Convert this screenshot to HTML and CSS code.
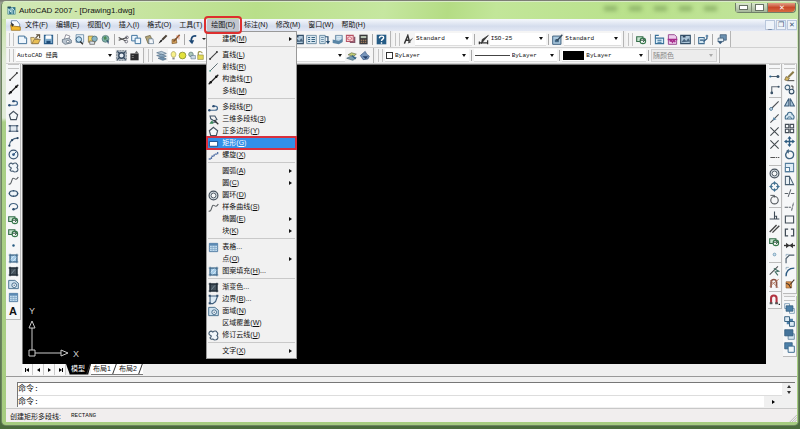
FILE: index.html
```html
<!DOCTYPE html>
<html lang="zh-CN">
<head>
    <meta charset="UTF-8">
    <meta name="viewport" content="width=device-width, initial-scale=1.0">
    <title>AutoCAD 2007 - [Drawing1.dwg]</title>
    <link rel="stylesheet" href="styles.css">
</head>
<body>
    <!-- icon set -->
    <svg class="defs" aria-hidden="true">
        <symbol id="app" viewBox="0 0 16 16"><path d="M1 2h14v13H1z" fill="#2a6f86"/><path d="M3 14V5l4 6V4M9 14V3l4 5v6" fill="none" stroke="#d6f2f2" stroke-width="1.6"/><path d="M1 1h6v2H1z" fill="#183c4c"/></symbol>
        <symbol id="doc" viewBox="0 0 16 16"><path d="M2 1h8l4 5v4H2z" fill="#f8fbff" stroke="#4a6a96"/><path d="M1 7l5 2 9 1v5H2z" fill="#f2b92c" stroke="#9a6a10"/><path d="M1 3l5 4-3 3z" fill="#333"/></symbol>
        <symbol id="new" viewBox="0 0 16 16"><path d="M2 3h9l3 3v8H2z" fill="#eef6fd" stroke="#3f6f98" stroke-width="1.4"/><path d="M11 3v3h3" fill="none" stroke="#3f6f98"/></symbol>
        <symbol id="open" viewBox="0 0 16 16"><path d="M1 5h5l1 2h5v7H2z" fill="#f3d684" stroke="#7d6840"/><path d="M3 14l3-6h9l-3 6z" fill="#e9bf55" stroke="#7d6840"/><path d="M8 6l5-5M9 1h5v5" fill="none" stroke="#574a35" stroke-width="1.6"/></symbol>
        <symbol id="save" viewBox="0 0 16 16"><path d="M2 2h12v12H2z" fill="#7da9cb" stroke="#2b5e8b" stroke-width="1.5"/><path d="M4 2h8v5H4z" fill="#fff"/><path d="M5 10h6v4H5z" fill="#1f4b76"/></symbol>
        <symbol id="print" viewBox="0 0 16 16"><path d="M5 7l2-6 6 2-2 5" fill="#fff" stroke="#667"/><path d="M2 8l9-2 4 3v4l-9 2-4-3z" fill="#bac5d0" stroke="#4f5f70"/><circle cx="10" cy="11" r="2" fill="#fff" stroke="#4f5f70"/></symbol>
        <symbol id="preview" viewBox="0 0 16 16"><path d="M3 1h11v11H3z" fill="#e8f2fa" stroke="#4d7595"/><circle cx="7" cy="8" r="4" fill="#bfe0f3" stroke="#355b7a" stroke-width="1.4"/><path d="M9 11l4 4" stroke="#333" stroke-width="2"/></symbol>
        <symbol id="publish" viewBox="0 0 16 16"><path d="M2 3h7l3 3v6H2z" fill="#f0d467" stroke="#746437"/><circle cx="11" cy="7" r="4" fill="#8ab5c5" stroke="#3f6472"/><path d="M4 10l7 1v4H4z" fill="#dae1e8" stroke="#555"/></symbol>
        <symbol id="globe" viewBox="0 0 16 16"><circle cx="8" cy="7" r="5" fill="#7fb0a8" stroke="#48706e"/><path d="M5 5l3-2 2 3-3 3zM9 9l3-1-1 3z" fill="#4b8b55"/><path d="M9 8l3 7 1-4" fill="#39547a"/></symbol>
        <symbol id="cut" viewBox="0 0 16 16"><path d="M1 5l10 5M1 9l12-4" stroke="#444" stroke-width="1.6"/><circle cx="13" cy="5" r="2" fill="none" stroke="#445"/><circle cx="12" cy="11" r="2" fill="none" stroke="#445"/></symbol>
        <symbol id="copy" viewBox="0 0 16 16"><path d="M1 2h8v8H1z" fill="#edf6fd" stroke="#3c719d" stroke-width="1.4"/><path d="M6 6h8v8H6z" fill="#edf6fd" stroke="#3c719d" stroke-width="1.4"/></symbol>
        <symbol id="paste" viewBox="0 0 16 16"><path d="M2 4l7-2 4 9-7 3z" fill="#b1a477" stroke="#655a3c"/><path d="M7 7h6l1 7H7z" fill="#f4f7fb" stroke="#54708b"/></symbol>
        <symbol id="brush" viewBox="0 0 16 16"><path d="M14 2L8 8" stroke="#4d4338" stroke-width="3"/><path d="M9 7l-2 4-5 3 3-5z" fill="#202020"/></symbol>
        <symbol id="block" viewBox="0 0 16 16"><path d="M3 8l6-1 1 6-7 1z" fill="#d7a45c" stroke="#76532d"/><path d="M14 1L8 8l-3 3" fill="none" stroke="#7b502d" stroke-width="2.2"/><path d="M9 3h4v5" fill="none" stroke="#d8683f"/></symbol>
        <symbol id="undo" viewBox="0 0 16 16"><path d="M12 3C6 2 4 6 5 12" fill="none" stroke="#1d4875" stroke-width="2.6"/><path d="M1 9h8l-3 6z" fill="#1d4875"/></symbol>
        <symbol id="props" viewBox="0 0 16 16"><path d="M1 2h14v12H1z" fill="#dbe9f2" stroke="#476e89"/><path d="M3 5h3M8 5h5M3 8h3M8 8h5M3 11h3M8 11h5" stroke="#34617f" stroke-width="1.6"/></symbol>
        <symbol id="center" viewBox="0 0 16 16"><path d="M1 2h8v12H1z" fill="#d8e8f2" stroke="#3f6988"/><path d="M3 5h4M3 8h4M3 11h4" stroke="#3f6988"/><path d="M9 4h4v7" fill="none" stroke="#274d70" stroke-width="1.8"/><path d="M10 10h6l-3 5z" fill="#274d70"/></symbol>
        <symbol id="sheet" viewBox="0 0 16 16"><path d="M5 2h10v9H5z" fill="#b2cee1" stroke="#52738f"/><path d="M1 8l9 2 5-3v5l-5 3-9-2z" fill="#5a86a6"/><path d="M7 4h6M7 7h6" stroke="#fff"/></symbol>
        <symbol id="markup" viewBox="0 0 16 16"><path d="M2 2h10v9H2z" fill="#f8dadd" stroke="#b75264" stroke-width="1.5"/><path d="M4 5l3-1 3 2-2 3-4-1z" fill="none" stroke="#c53b50"/><path d="M7 12h7v-8" fill="none" stroke="#87576a" stroke-width="2"/></symbol>
        <symbol id="calc" viewBox="0 0 16 16"><path d="M2 1h12v14H2z" fill="#39393b"/><path d="M4 3h8v3H4z" fill="#b9c5b5"/><path d="M4 9h8M4 12h8" stroke="#bd8f68" stroke-width="1.6" stroke-dasharray="2 1"/></symbol>
        <symbol id="help" viewBox="0 0 16 16"><path d="M1 1h14v14H1z" fill="#245b85"/><path d="M5 6c0-4 7-4 6 0-1 2-3 2-3 4M8 12v2" fill="none" stroke="#fff" stroke-width="2"/></symbol>
        <symbol id="textstyle" viewBox="0 0 16 16"><path d="M2 14L7 2l3 11M4 9h5" fill="none" stroke="#333" stroke-width="2"/><path d="M15 5l-5 7-3 2 1-4z" fill="#555"/></symbol>
        <symbol id="dimstyle" viewBox="0 0 16 16"><path d="M1 13h13M2 11v4M14 9v6" stroke="#333" stroke-width="1.8"/><path d="M15 2l-7 8-3 4 1-6z" fill="#333" stroke="#333"/></symbol>
        <symbol id="tabstyle" viewBox="0 0 16 16"><path d="M1 3h12v12H1z" fill="#a9c7dd" stroke="#3d617f" stroke-width="1.4"/><path d="M4 8h6v4H4z" fill="#456b89"/><path d="M15 1L8 9l-2-1" fill="none" stroke="#34495c" stroke-width="2"/></symbol>
        <symbol id="region2" viewBox="0 0 16 16"><path d="M1 4h9v7H1z" fill="#c7e3cf" stroke="#356d49" stroke-width="1.6"/><circle cx="10" cy="10" r="4" fill="#fff" stroke="#37794c" stroke-width="1.6"/><path d="M6 9h6M10 7l3 2-3 3" fill="none" stroke="#214a32" stroke-width="1.4"/></symbol>
        <symbol id="xref" viewBox="0 0 16 16"><path d="M2 6h12v8H2z" fill="#d9edf8" stroke="#3a7199" stroke-width="1.5"/><path d="M2 6V2h5M5 9h6M5 12h6" fill="none" stroke="#3a7199" stroke-width="1.6"/></symbol>
        <symbol id="attr" viewBox="0 0 16 16"><path d="M2 1h9l3 3v11H2z" fill="#edcceb" stroke="#984a91" stroke-width="1.4"/><path d="M1 8h14M4 11l2-2 2 3 2-3 2 3" fill="none" stroke="#a72b8b" stroke-width="2"/></symbol>
        <symbol id="image" viewBox="0 0 16 16"><path d="M1 2h14v12H1z" fill="#acc5d8" stroke="#355069" stroke-width="1.6"/><path d="M2 12l4-5 3 3 3-4 3 5" fill="#49657f"/><path d="M4 4h4" stroke="#263b54" stroke-width="2"/></symbol>
        <symbol id="blockedit" viewBox="0 0 16 16"><path d="M1 5h8v9H1z" fill="#d4e7f2" stroke="#406d91" stroke-width="1.5"/><path d="M3 9h5M8 11l5-4V3" fill="none" stroke="#2e5980" stroke-width="1.7"/><circle cx="13" cy="3" r="2" fill="#668bab"/></symbol>
        <symbol id="stack" viewBox="0 0 16 16"><path d="M6 1h9v8H6z" fill="#6c91b0" stroke="#34526d"/><path d="M3 6h8v5H3z" fill="#dce9f2" stroke="#34526d"/><path d="M2 10l4 5 4-4" fill="#36597a"/></symbol>
        <symbol id="gear" viewBox="0 0 16 16"><path d="M1 1h14v14H1z" fill="#b8c1ca" stroke="#52606d" stroke-dasharray="3 1"/><circle cx="8" cy="8" r="4" fill="#e6edf4" stroke="#31465c" stroke-width="2"/><path d="M2 2l3 3M14 2l-3 3M2 14l3-3M14 14l-3-3" stroke="#31465c" stroke-width="1.6"/></symbol>
        <symbol id="myws" viewBox="0 0 16 16"><path d="M2 5h12v10H2z" fill="#2b2b2d"/><path d="M8 5l3-4 3 4" fill="#666"/><path d="M4 8h3M4 11h3" stroke="#999"/></symbol>
        <symbol id="layers" viewBox="0 0 16 16"><path d="M1 4l7-2 7 3-6 2z" fill="#b8cbd9" stroke="#536f88"/><path d="M1 8l7-2 7 3-6 2z" fill="#8eacc3" stroke="#536f88"/><path d="M3 12l6-2 6 3-5 2z" fill="#6e91ae" stroke="#536f88"/></symbol>
        <symbol id="bulb" viewBox="0 0 16 16"><path d="M6 11C2 7 4 1 8 1s6 6 2 10z" fill="#f8f18a" stroke="#8a8240"/><path d="M6 12h4v3H6z" fill="#89888a"/></symbol>
        <symbol id="sun" viewBox="0 0 16 16"><circle cx="8" cy="8" r="6" fill="#e2e23d" stroke="#8c9134" stroke-width="1.5"/></symbol>
        <symbol id="vp" viewBox="0 0 16 16"><circle cx="7" cy="6" r="4" fill="#abc7bb" stroke="#5d7d77" stroke-width="1.4"/><path d="M7 8h8v6H7z" fill="#cbd9e5" stroke="#597388"/></symbol>
        <symbol id="lock" viewBox="0 0 16 16"><path d="M4 7V3c1-3 7-2 7 1" fill="none" stroke="#9a9345" stroke-width="2"/><path d="M3 7h10v8H3z" fill="#e2d953" stroke="#8a823b"/></symbol>
        <symbol id="layprev" viewBox="0 0 16 16"><path d="M1 12l6-3 8 2-5 4z" fill="#789bae" stroke="#476678"/><path d="M3 7l5-3 7 2-4 3z" fill="#c0cb74" stroke="#69724a"/><path d="M9 8l5 5" stroke="#2f638a" stroke-width="2"/></symbol>
        <symbol id="laystate" viewBox="0 0 16 16"><path d="M2 8l7-6 2 4 4 3-2 4-7 1z" fill="#7795ba" stroke="#33527d"/><path d="M5 9h8l-3 4z" fill="#233f69"/></symbol>
        <symbol id="line" viewBox="0 0 16 16"><path d="M3 13L13 3" stroke="#444" stroke-width="1.6"/><circle cx="3" cy="13" r="1.4" fill="#333"/><circle cx="13" cy="3" r="1.4" fill="#333"/></symbol>
        <symbol id="ray" viewBox="0 0 16 16"><path d="M3 13L14 2" stroke="#596b70" stroke-width="1.4"/><circle cx="3" cy="13" r="1.2" fill="#398"/></symbol>
        <symbol id="xline" viewBox="0 0 16 16"><path d="M1 15L15 1" stroke="#222" stroke-width="1.8"/><circle cx="4" cy="12" r="1.8" fill="#111"/><circle cx="12" cy="4" r="1.8" fill="#111"/></symbol>
        <symbol id="pline" viewBox="0 0 16 16"><path d="M2 12h8c5 0 5-6 0-6H8M4 12" fill="none" stroke="#456b91" stroke-width="1.8"/><circle cx="8" cy="6" r="1.8" fill="#2b4c70"/><circle cx="2" cy="12" r="1.8" fill="#2b4c70"/></symbol>
        <symbol id="poly3d" viewBox="0 0 16 16"><path d="M3 3h7l3 5-4 2-5-3zM4 12h9" fill="none" stroke="#3e5267" stroke-width="1.6"/><path d="M2 14l4-5 2 5z" fill="#368655"/><path d="M9 9l6 6" stroke="#333" stroke-width="1.8"/></symbol>
        <symbol id="polygon" viewBox="0 0 16 16"><path d="M8 2l6 5-2 7H4L2 7z" fill="#f4f8fa" stroke="#44515e" stroke-width="1.7"/></symbol>
        <symbol id="rect" viewBox="0 0 16 16"><path d="M3 4h10v8H3z" fill="#e2eaf1" stroke="#495e75" stroke-width="1.5"/><path d="M1 3h3v2H1zM12 11h3v2h-3zM12 3h3v2h-3zM1 11h3v2H1z" fill="#40566d"/></symbol>
        <symbol id="rectsel" viewBox="0 0 16 16"><path d="M2 5h12v7H2z" fill="#fff" stroke="#194f8d" stroke-width="1.4"/></symbol>
        <symbol id="arc" viewBox="0 0 16 16"><path d="M2 14C2 8 7 3 14 3" fill="none" stroke="#49657e" stroke-width="1.7"/><circle cx="2" cy="14" r="1.6" fill="#284562"/><circle cx="6" cy="6" r="1.6" fill="#284562"/><circle cx="14" cy="3" r="1.6" fill="#284562"/></symbol>
        <symbol id="circle" viewBox="0 0 16 16"><circle cx="8" cy="8" r="6.4" fill="#edf5fa" stroke="#3b5572" stroke-width="1.7"/><circle cx="8" cy="8" r="2" fill="#335a86"/><path d="M8 8l4-4" stroke="#335a86" stroke-width="1.4"/></symbol>
        <symbol id="donut" viewBox="0 0 16 16"><circle cx="8" cy="8" r="6.4" fill="#dde5eb" stroke="#48535e" stroke-width="1.7"/><circle cx="8" cy="8" r="3.6" fill="#f5f7f8" stroke="#48535e" stroke-width="1.4"/></symbol>
        <symbol id="cloud" viewBox="0 0 16 16"><path d="M2 3c2-2 4-1 5 0 2-2 5-2 6 0 2 2 1 4 0 5 2 2 2 5-1 6-2 1-4 0-5-1-2 1-4 0-4-2 2-1 2-2 1-3-3-1-3-3-2-5z" fill="#f1f6fa" stroke="#455b70" stroke-width="1.6"/></symbol>
        <symbol id="spline" viewBox="0 0 16 16"><path d="M1 13C5 15 5 7 7 5s4 5 8-2" fill="none" stroke="#5b6064" stroke-width="1.6"/></symbol>
        <symbol id="ellipse" viewBox="0 0 16 16"><ellipse cx="8" cy="8" rx="6" ry="4" fill="#eef5fa" stroke="#345472" stroke-width="1.8"/><path d="M1 8h2M13 8h2M8 3v2M8 11v2" stroke="#345472" stroke-width="2"/></symbol>
        <symbol id="earc" viewBox="0 0 16 16"><path d="M2 9C1 2 14 2 14 8c0 3-4 4-6 4" fill="none" stroke="#456583" stroke-width="1.7"/><circle cx="8" cy="12" r="1.8" fill="#294b6d"/></symbol>
        <symbol id="point" viewBox="0 0 16 16"><circle cx="8" cy="8" r="1.8" fill="#285c83"/></symbol>
        <symbol id="hatch" viewBox="0 0 16 16"><path d="M3 3h10v10H3z" fill="#a5cbe7" stroke="#416b8d" stroke-width="1.4"/><path d="M3 10l7-7M6 13l7-7" stroke="#e4f2fb"/><path d="M1 3h14M1 13h14M3 1v14M13 1v14" stroke="#416b8d" stroke-width="1.2"/></symbol>
        <symbol id="grad" viewBox="0 0 16 16"><path d="M3 3h10v10H3z" fill="#46535d" stroke="#202c37" stroke-width="1.6"/><path d="M1 3h14M1 13h14M3 1v14M13 1v14" stroke="#202c37" stroke-width="1.6"/><path d="M5 11l5-6" stroke="#8fa4b2"/></symbol>
        <symbol id="bound" viewBox="0 0 16 16"><path d="M3 3h11l-3 8-4 3H3z" fill="#dbe9f3" stroke="#405f7d" stroke-width="1.6"/><path d="M1 1h3v3H1zM12 1h3v3h-3zM1 12h3v3H1z" fill="#34516f"/></symbol>
        <symbol id="region" viewBox="0 0 16 16"><path d="M1 2h9l5 4v8H1z" fill="#cfe2ef" stroke="#4b7290" stroke-width="1.4"/><circle cx="9" cy="9" r="3.4" fill="#f4f8fc" stroke="#3e6787" stroke-width="1.4"/><circle cx="9" cy="9" r="1" fill="#3e6787"/></symbol>
        <symbol id="table" viewBox="0 0 16 16"><path d="M2 2h12v12H2z" fill="#c4ddf0" stroke="#527ca2" stroke-width="1.4"/><path d="M2 5h12M2 8h12M2 11h12M6 5v9M10 5v9" stroke="#7da4c4"/><path d="M2 2h12v3H2z" fill="#5e8bb4"/></symbol>
        <symbol id="helix" viewBox="0 0 16 16"><path d="M1 13h4V9h4V6h5V3" fill="none" stroke="#5875a8" stroke-width="2" stroke-dasharray="3 1"/></symbol>
        <symbol id="track" viewBox="0 0 16 16"><path d="M3 8h10" stroke="#4e5c68" stroke-width="1.4"/><circle cx="2" cy="8" r="1.6" fill="#2c648b"/><circle cx="13" cy="8" r="2.2" fill="#36536c"/></symbol>
        <symbol id="from" viewBox="0 0 16 16"><path d="M4 14V4h10" fill="none" stroke="#5f6a74" stroke-width="1.6"/><circle cx="4" cy="13" r="2" fill="#3a5268"/><circle cx="14" cy="4" r="1.6" fill="#3a5268"/></symbol>
        <symbol id="endp" viewBox="0 0 16 16"><path d="M4 12L14 2" stroke="#4c5054" stroke-width="1.6"/><circle cx="3" cy="13" r="2" fill="#fff" stroke="#3b6c91" stroke-width="1.4"/></symbol>
        <symbol id="midp" viewBox="0 0 16 16"><path d="M2 14L14 2" stroke="#4c5054" stroke-width="1.6"/><path d="M6 11V6l5 3z" fill="#5a87a8"/></symbol>
        <symbol id="inter" viewBox="0 0 16 16"><path d="M2 2l12 12M2 14L14 2" stroke="#454b50" stroke-width="1.6"/></symbol>
        <symbol id="ext" viewBox="0 0 16 16"><path d="M2 8h13" stroke="#555" stroke-width="1.6" stroke-dasharray="7 1 2 1"/></symbol>
        <symbol id="quad" viewBox="0 0 16 16"><circle cx="8" cy="8" r="5" fill="none" stroke="#496e89" stroke-width="1.5"/><path d="M8 0l2 3-2 3-2-3zM8 10l2 3-2 3-2-3zM0 8l3-2 3 2-3 2zM10 8l3-2 3 2-3 2z" fill="#417394"/></symbol>
        <symbol id="tan" viewBox="0 0 16 16"><circle cx="8" cy="9" r="5.4" fill="none" stroke="#51565b" stroke-width="1.6"/><path d="M2 2h6v3" fill="none" stroke="#51565b" stroke-width="1.4"/></symbol>
        <symbol id="perp" viewBox="0 0 16 16"><path d="M8 2v11M1 13h14M8 9h3v4" fill="none" stroke="#414d58" stroke-width="1.6"/></symbol>
        <symbol id="para" viewBox="0 0 16 16"><path d="M1 13L11 3M5 14L15 4" stroke="#454545" stroke-width="2"/></symbol>
        <symbol id="node" viewBox="0 0 16 16"><circle cx="8" cy="8" r="2" fill="#cde" stroke="#568ba8"/></symbol>
        <symbol id="near" viewBox="0 0 16 16"><path d="M1 14L13 2" stroke="#4b5052" stroke-width="1.6"/><path d="M7 5l7 4-5 1 4 5" fill="none" stroke="#406d62" stroke-width="1.6"/></symbol>
        <symbol id="nosnap" viewBox="0 0 16 16"><path d="M3 14V6c0-5 8-5 8 0v8" fill="none" stroke="#8c5244" stroke-width="2.4"/><path d="M1 12L14 2M2 3l11 11" stroke="#b2785f" stroke-width="1.4"/></symbol>
        <symbol id="magnet" viewBox="0 0 16 16"><path d="M3 14V6c0-5 8-5 8 0v8" fill="none" stroke="#b13340" stroke-width="3"/><path d="M1 12h4v3H1zM9 12h4v3H9z" fill="#555"/><path d="M14 14h2v2h-2z" fill="#222"/></symbol>
        <symbol id="erase" viewBox="0 0 16 16"><path d="M14 1L6 9" stroke="#8a7b48" stroke-width="3"/><path d="M3 8l5 3-3 3-4-1z" fill="#d3b55d" stroke="#6d5a36"/><path d="M5 14h10" stroke="#555" stroke-width="1.6"/></symbol>
        <symbol id="copyobj" viewBox="0 0 16 16"><circle cx="5" cy="5" r="3.4" fill="#eaf1f6" stroke="#45647d" stroke-width="1.6"/><circle cx="11" cy="11" r="3.4" fill="#eaf1f6" stroke="#344d65" stroke-width="1.6"/><path d="M10 3h3v4" fill="none" stroke="#333" stroke-width="1.4"/></symbol>
        <symbol id="mirror" viewBox="0 0 16 16"><path d="M7 2v11H1zM9 2v11h6z" fill="#a8c4d8" stroke="#3f5f7c" stroke-width="1.5"/></symbol>
        <symbol id="offset" viewBox="0 0 16 16"><path d="M2 13c-1-4 1-6 3-6 0-5 7-5 7 0 3 0 3 4 2 6z" fill="#d7e8f3" stroke="#426d8c" stroke-width="1.6"/><path d="M5 13c0-2 1-3 3-3s3 1 3 3" fill="none" stroke="#426d8c" stroke-width="1.4"/></symbol>
        <symbol id="array" viewBox="0 0 16 16"><path d="M2 2h5v5H2zM9 2h5v5H9zM2 9h5v5H2zM9 9h5v5H9z" fill="#f4f7f8" stroke="#444d56" stroke-width="1.6"/></symbol>
        <symbol id="move" viewBox="0 0 16 16"><path d="M8 2v12M2 8h12" stroke="#2f5c80" stroke-width="2"/><path d="M8 0l3 4H5zM8 16l3-4H5zM0 8l4-3v6zM16 8l-4-3v6z" fill="#2f5c80"/></symbol>
        <symbol id="rotate" viewBox="0 0 16 16"><path d="M5 4c-5 4-2 10 3 10 7 0 8-9 2-11H5" fill="none" stroke="#3f6380" stroke-width="1.9"/><path d="M7 0L3 3l4 4z" fill="#3f6380"/></symbol>
        <symbol id="scale" viewBox="0 0 16 16"><path d="M2 2h12v12H2z" fill="#e0edf6" stroke="#547d9c" stroke-width="1.5"/><path d="M2 8h6v6H2z" fill="#f9fcfe" stroke="#547d9c" stroke-width="1.5"/></symbol>
        <symbol id="stretch" viewBox="0 0 16 16"><path d="M2 2h6l6 12H2z" fill="#eaf1f5" stroke="#4a6072" stroke-width="1.5"/><path d="M8 2v12" stroke="#4a6072" stroke-width="1.4"/></symbol>
        <symbol id="trim" viewBox="0 0 16 16"><path d="M1 8h5M10 8h5M6 13l4-11" stroke="#5b6268" stroke-width="1.5"/></symbol>
        <symbol id="extend" viewBox="0 0 16 16"><path d="M1 9h9M11 14l3-12" stroke="#5b6268" stroke-width="1.5" stroke-dasharray="5 1"/></symbol>
        <symbol id="brkpt" viewBox="0 0 16 16"><path d="M2 3h12v10H2z" fill="#f7f8f9" stroke="#414c56" stroke-width="1.6"/></symbol>
        <symbol id="brk" viewBox="0 0 16 16"><path d="M6 3H2v10h4M10 3h4v10h-4" fill="none" stroke="#414c56" stroke-width="1.8"/></symbol>
        <symbol id="join" viewBox="0 0 16 16"><path d="M0 8h16" stroke="#333" stroke-width="2"/><path d="M3 4l5 4-5 4zM13 4L8 8l5 4z" fill="#333"/></symbol>
        <symbol id="chamfer" viewBox="0 0 16 16"><path d="M3 15V8l5-5h7" fill="none" stroke="#4c5e6c" stroke-width="1.7"/><path d="M3 5V2h4" fill="none" stroke="#7b98ad"/></symbol>
        <symbol id="fillet" viewBox="0 0 16 16"><path d="M3 15C3 7 7 3 15 3" fill="none" stroke="#2d5b82" stroke-width="2"/><path d="M3 5V2h4" fill="none" stroke="#7b98ad"/></symbol>
        <symbol id="explode" viewBox="0 0 16 16"><path d="M3 4h8v9H3z" fill="#e0944a" stroke="#8a5a30"/><path d="M15 1l-6 7M3 6l4 2 3 5" fill="none" stroke="#49372c" stroke-width="1.6"/></symbol>
        <symbol id="order1" viewBox="0 0 16 16"><path d="M1 1h7v7H1zM8 8h7v7H8z" fill="#fff" stroke="#557d9e"/><path d="M3 4h10v8H3z" fill="#4c7fa8" stroke="#2a5678"/></symbol>
        <symbol id="order2" viewBox="0 0 16 16"><path d="M4 4h9v8H4z" fill="#4c7fa8"/><path d="M1 1h7v7H1zM8 8h7v7H8z" fill="#dceaf4" stroke="#2a5678" stroke-width="1.3"/></symbol>
        <symbol id="order3" viewBox="0 0 16 16"><path d="M6 7h9v8H6z" fill="#d7e6f1" stroke="#456c8b"/><path d="M1 1h12v9H1z" fill="#44739a" stroke="#2a5678"/></symbol>
        <symbol id="order4" viewBox="0 0 16 16"><path d="M1 1h11v9H1z" fill="#4c7fa8" stroke="#2a5678"/><path d="M6 6h9v9H6z" fill="#f0f6fa" stroke="#3a6a90" stroke-width="1.4"/></symbol>
    </svg>

    <div class="window">
        <header class="titlebar">
            <svg class="icon"><use href="#app"/></svg>
            <h1>AutoCAD 2007 - [Drawing1.dwg]</h1>
            <div class="glass"><i></i><i></i><i></i><i></i><i></i></div>
            <div class="winbtns">
                <button class="min" aria-label="最小化"></button>
                <button class="max" aria-label="最大化"></button>
                <button class="close" aria-label="关闭">✕</button>
            </div>
        </header>

        <nav class="menubar">
            <svg class="icon"><use href="#doc"/></svg>
            <a href="#">文件(F)</a>
            <a href="#">编辑(E)</a>
            <a href="#">视图(V)</a>
            <a href="#">插入(I)</a>
            <a href="#">格式(O)</a>
            <a href="#">工具(T)</a>
            <div class="opened">
                <a href="#" class="active">绘图(D)</a>
                <ul class="dropdown">
                    <li><a href="#" class="more">建模(<u>M</u>)</a></li>
                    <li class="sep"></li>
                    <li><a href="#"><svg class="icon"><use href="#line"/></svg>直线(<u>L</u>)</a></li>
                    <li><a href="#"><svg class="icon"><use href="#ray"/></svg>射线(<u>R</u>)</a></li>
                    <li><a href="#"><svg class="icon"><use href="#xline"/></svg>构造线(<u>T</u>)</a></li>
                    <li><a href="#">多线(<u>M</u>)</a></li>
                    <li class="sep"></li>
                    <li><a href="#"><svg class="icon"><use href="#pline"/></svg>多段线(<u>P</u>)</a></li>
                    <li><a href="#"><svg class="icon"><use href="#poly3d"/></svg>三维多段线(<u>3</u>)</a></li>
                    <li><a href="#"><svg class="icon"><use href="#polygon"/></svg>正多边形(<u>Y</u>)</a></li>
                    <li><a href="#" class="selected"><svg class="icon"><use href="#rectsel"/></svg>矩形(<u>G</u>)</a></li>
                    <li><a href="#"><svg class="icon"><use href="#helix"/></svg>螺旋(<u>X</u>)</a></li>
                    <li class="sep"></li>
                    <li><a href="#" class="more">圆弧(<u>A</u>)</a></li>
                    <li><a href="#" class="more">圆(<u>C</u>)</a></li>
                    <li><a href="#"><svg class="icon"><use href="#donut"/></svg>圆环(<u>D</u>)</a></li>
                    <li><a href="#"><svg class="icon"><use href="#spline"/></svg>样条曲线(<u>S</u>)</a></li>
                    <li><a href="#" class="more">椭圆(<u>E</u>)</a></li>
                    <li><a href="#" class="more">块(<u>K</u>)</a></li>
                    <li class="sep"></li>
                    <li><a href="#"><svg class="icon"><use href="#table"/></svg>表格...</a></li>
                    <li><a href="#" class="more">点(<u>O</u>)</a></li>
                    <li><a href="#"><svg class="icon"><use href="#hatch"/></svg>图案填充(<u>H</u>)...</a></li>
                    <li class="sep"></li>
                    <li><a href="#"><svg class="icon"><use href="#grad"/></svg>渐变色...</a></li>
                    <li><a href="#"><svg class="icon"><use href="#bound"/></svg>边界(<u>B</u>)...</a></li>
                    <li><a href="#"><svg class="icon"><use href="#region"/></svg>面域(<u>N</u>)</a></li>
                    <li><a href="#">区域覆盖(<u>W</u>)</a></li>
                    <li><a href="#"><svg class="icon"><use href="#cloud"/></svg>修订云线(<u>U</u>)</a></li>
                    <li class="sep"></li>
                    <li><a href="#" class="more">文字(<u>X</u>)</a></li>
                </ul>
            </div>
            <a href="#">标注(N)</a>
            <a href="#">修改(M)</a>
            <a href="#">窗口(W)</a>
            <a href="#">帮助(H)</a>
            <div class="mdi">
                <button aria-label="最小化窗口">_</button>
                <button aria-label="还原窗口">❐</button>
                <button aria-label="关闭窗口">✕</button>
            </div>
        </nav>

        <div class="toolrow">
            <div class="toolbar standard">
                <button aria-label="新建"><svg class="icon"><use href="#new"/></svg></button>
                <button aria-label="打开"><svg class="icon"><use href="#open"/></svg></button>
                <button aria-label="保存"><svg class="icon"><use href="#save"/></svg></button>
                <span class="vsep"></span>
                <button aria-label="打印"><svg class="icon"><use href="#print"/></svg></button>
                <button aria-label="打印预览"><svg class="icon"><use href="#preview"/></svg></button>
                <button aria-label="发布"><svg class="icon"><use href="#publish"/></svg></button>
                <button aria-label="三维DWF"><svg class="icon"><use href="#globe"/></svg></button>
                <span class="vsep"></span>
                <button aria-label="剪切"><svg class="icon"><use href="#cut"/></svg></button>
                <button aria-label="复制"><svg class="icon"><use href="#copy"/></svg></button>
                <button aria-label="粘贴"><svg class="icon"><use href="#paste"/></svg></button>
                <button aria-label="特性匹配"><svg class="icon"><use href="#brush"/></svg></button>
                <button aria-label="块编辑器"><svg class="icon"><use href="#block"/></svg></button>
                <span class="vsep"></span>
                <button aria-label="放弃"><svg class="icon"><use href="#undo"/></svg></button>
                <span class="caret"></span>
                <button class="push" aria-label="特性"><svg class="icon"><use href="#image"/></svg></button>
                <button aria-label="设计中心"><svg class="icon"><use href="#props"/></svg></button>
                <button aria-label="工具选项板"><svg class="icon"><use href="#center"/></svg></button>
                <button aria-label="图纸集"><svg class="icon"><use href="#sheet"/></svg></button>
                <button aria-label="标记集"><svg class="icon"><use href="#markup"/></svg></button>
                <button aria-label="计算器"><svg class="icon"><use href="#calc"/></svg></button>
                <span class="vsep"></span>
                <button aria-label="帮助"><svg class="icon"><use href="#help"/></svg></button>
            </div>
            <div class="toolbar styles">
                <button aria-label="文字样式"><svg class="icon"><use href="#textstyle"/></svg></button>
                <label class="combo"><select aria-label="文字样式"><option>Standard</option></select></label>
                <span class="vsep"></span>
                <button aria-label="标注样式"><svg class="icon"><use href="#dimstyle"/></svg></button>
                <label class="combo"><select aria-label="标注样式"><option>ISO-25</option></select></label>
                <span class="vsep"></span>
                <button aria-label="表格样式"><svg class="icon"><use href="#tabstyle"/></svg></button>
                <label class="combo"><select aria-label="表格样式"><option>Standard</option></select></label>
            </div>
            <div class="toolbar">
                <button aria-label="插入块"><svg class="icon"><use href="#region2"/></svg></button>
                <span class="vsep"></span>
                <button aria-label="外部参照"><svg class="icon"><use href="#xref"/></svg></button>
                <button aria-label="属性"><svg class="icon"><use href="#attr"/></svg></button>
                <button aria-label="图像"><svg class="icon"><use href="#image"/></svg></button>
                <span class="vsep"></span>
                <button aria-label="编辑块"><svg class="icon"><use href="#blockedit"/></svg></button>
                <span class="vsep"></span>
                <button aria-label="绘图次序"><svg class="icon"><use href="#stack"/></svg></button>
            </div>
        </div>

        <div class="toolrow second">
            <div class="toolbar workspace">
                <label class="combo"><select aria-label="工作空间"><option>AutoCAD 经典</option></select></label>
                <button aria-label="工作空间设置"><svg class="icon"><use href="#gear"/></svg></button>
                <button aria-label="我的工作空间"><svg class="icon"><use href="#myws"/></svg></button>
            </div>
            <div class="toolbar layer">
                <button aria-label="图层特性"><svg class="icon"><use href="#layers"/></svg></button>
                <label class="combo">
                    <svg class="icon"><use href="#bulb"/></svg>
                    <svg class="icon"><use href="#sun"/></svg>
                    <svg class="icon"><use href="#vp"/></svg>
                    <svg class="icon"><use href="#lock"/></svg>
                    <select aria-label="图层"><option>0</option></select>
                </label>
                <button aria-label="上一个图层"><svg class="icon"><use href="#layprev"/></svg></button>
                <button aria-label="图层状态"><svg class="icon"><use href="#laystate"/></svg></button>
            </div>
            <div class="toolbar properties">
                <label class="combo"><span class="swatch"></span><select aria-label="颜色"><option>ByLayer</option></select></label>
                <span class="vsep"></span>
                <label class="combo"><span class="stroke"></span><select aria-label="线型"><option>ByLayer</option></select></label>
                <span class="vsep"></span>
                <label class="combo"><span class="weight"></span><select aria-label="线宽"><option>ByLayer</option></select></label>
                <span class="vsep"></span>
                <label class="combo off"><select aria-label="打印样式" disabled><option>随颜色</option></select></label>
            </div>
        </div>

        <main class="work">
            <aside class="side">
                <div class="vbar">
                    <button aria-label="直线"><svg class="icon"><use href="#line"/></svg></button>
                    <button aria-label="构造线"><svg class="icon"><use href="#xline"/></svg></button>
                    <button aria-label="多段线"><svg class="icon"><use href="#pline"/></svg></button>
                    <button aria-label="正多边形"><svg class="icon"><use href="#polygon"/></svg></button>
                    <button aria-label="矩形"><svg class="icon"><use href="#rect"/></svg></button>
                    <button aria-label="圆弧"><svg class="icon"><use href="#arc"/></svg></button>
                    <button aria-label="圆"><svg class="icon"><use href="#circle"/></svg></button>
                    <button aria-label="修订云线"><svg class="icon"><use href="#cloud"/></svg></button>
                    <button aria-label="样条曲线"><svg class="icon"><use href="#spline"/></svg></button>
                    <button aria-label="椭圆"><svg class="icon"><use href="#ellipse"/></svg></button>
                    <button aria-label="椭圆弧"><svg class="icon"><use href="#earc"/></svg></button>
                    <button aria-label="插入块"><svg class="icon"><use href="#region2"/></svg></button>
                    <button aria-label="创建块"><svg class="icon"><use href="#region2"/></svg></button>
                    <button aria-label="点"><svg class="icon"><use href="#point"/></svg></button>
                    <button aria-label="图案填充"><svg class="icon"><use href="#hatch"/></svg></button>
                    <button aria-label="渐变色"><svg class="icon"><use href="#grad"/></svg></button>
                    <button aria-label="面域"><svg class="icon"><use href="#region"/></svg></button>
                    <button aria-label="表格"><svg class="icon"><use href="#table"/></svg></button>
                    <button class="mtext">A</button>
                </div>
            </aside>

            <section class="drawing">
                <div class="canvas">
                    <svg class="ucs" viewBox="0 0 60 60" role="img" aria-label="UCS">
                        <path d="M6 46h6v6H6zM9 46V24M12 49h26M6 24l3-7 3 7zM38 46l7 3-7 3z"/>
                        <text x="6" y="10">Y</text>
                        <text x="50" y="53">X</text>
                    </svg>
                </div>
                <div class="tabs">
                    <button aria-label="第一个"><i class="tri bar left"></i></button>
                    <button aria-label="上一个"><i class="tri left"></i></button>
                    <button aria-label="下一个"><i class="tri right"></i></button>
                    <button aria-label="最后一个"><i class="tri bar right"></i></button>
                    <a href="#" class="tab current">模型</a>
                    <a href="#" class="tab">布局1</a>
                    <a href="#" class="tab">布局2</a>
                </div>
            </section>

            <aside class="side end">
                <div class="vbar">
                    <button aria-label="临时追踪点"><svg class="icon"><use href="#track"/></svg></button>
                    <button aria-label="捕捉自"><svg class="icon"><use href="#from"/></svg></button>
                    <span class="hsep"></span>
                    <button aria-label="端点"><svg class="icon"><use href="#endp"/></svg></button>
                    <button aria-label="中点"><svg class="icon"><use href="#midp"/></svg></button>
                    <button aria-label="交点"><svg class="icon"><use href="#inter"/></svg></button>
                    <button aria-label="外观交点"><svg class="icon"><use href="#inter"/></svg></button>
                    <button aria-label="延长线"><svg class="icon"><use href="#ext"/></svg></button>
                    <span class="hsep"></span>
                    <button aria-label="圆心"><svg class="icon"><use href="#donut"/></svg></button>
                    <button aria-label="象限点"><svg class="icon"><use href="#quad"/></svg></button>
                    <button aria-label="切点"><svg class="icon"><use href="#tan"/></svg></button>
                    <span class="hsep"></span>
                    <button aria-label="垂足"><svg class="icon"><use href="#perp"/></svg></button>
                    <button aria-label="平行线"><svg class="icon"><use href="#para"/></svg></button>
                    <button aria-label="插入点"><svg class="icon"><use href="#region2"/></svg></button>
                    <button aria-label="节点"><svg class="icon"><use href="#node"/></svg></button>
                    <span class="hsep"></span>
                    <button aria-label="最近点"><svg class="icon"><use href="#near"/></svg></button>
                    <button aria-label="无捕捉"><svg class="icon"><use href="#nosnap"/></svg></button>
                    <span class="hsep"></span>
                    <button aria-label="捕捉设置"><svg class="icon"><use href="#magnet"/></svg></button>
                </div>
            </aside>
            <aside class="side end">
                <div class="vbar">
                    <button aria-label="删除"><svg class="icon"><use href="#erase"/></svg></button>
                    <button aria-label="复制对象"><svg class="icon"><use href="#copyobj"/></svg></button>
                    <button aria-label="镜像"><svg class="icon"><use href="#mirror"/></svg></button>
                    <button aria-label="偏移"><svg class="icon"><use href="#offset"/></svg></button>
                    <button aria-label="阵列"><svg class="icon"><use href="#array"/></svg></button>
                    <button aria-label="移动"><svg class="icon"><use href="#move"/></svg></button>
                    <button aria-label="旋转"><svg class="icon"><use href="#rotate"/></svg></button>
                    <button aria-label="缩放"><svg class="icon"><use href="#scale"/></svg></button>
                    <button aria-label="拉伸"><svg class="icon"><use href="#stretch"/></svg></button>
                    <button aria-label="修剪"><svg class="icon"><use href="#trim"/></svg></button>
                    <button aria-label="延伸"><svg class="icon"><use href="#extend"/></svg></button>
                    <button aria-label="打断于点"><svg class="icon"><use href="#brkpt"/></svg></button>
                    <button aria-label="打断"><svg class="icon"><use href="#brk"/></svg></button>
                    <button aria-label="合并"><svg class="icon"><use href="#join"/></svg></button>
                    <button aria-label="倒角"><svg class="icon"><use href="#chamfer"/></svg></button>
                    <button aria-label="圆角"><svg class="icon"><use href="#fillet"/></svg></button>
                    <button aria-label="分解"><svg class="icon"><use href="#explode"/></svg></button>
                </div>
                <div class="vbar">
                    <button aria-label="前置"><svg class="icon"><use href="#order1"/></svg></button>
                    <button aria-label="后置"><svg class="icon"><use href="#order2"/></svg></button>
                    <button aria-label="置于对象之上"><svg class="icon"><use href="#order3"/></svg></button>
                    <button aria-label="置于对象之下"><svg class="icon"><use href="#order4"/></svg></button>
                </div>
            </aside>
        </main>

        <section class="command">
            <div class="lines">
                <p>命令:</p>
                <div class="prompt"><label for="cmd">命令:</label><input type="text" id="cmd"><button aria-label="向右滚动"><i class="tri right"></i></button></div>
            </div>
            <div class="scroll">
                <button aria-label="向上滚动"><i class="tri up"></i></button>
                <button aria-label="向下滚动"><i class="tri down"></i></button>
            </div>
        </section>

        <footer class="status">
            <span>创建矩形多段线:</span><code>RECTANG</code>
            <svg class="icon grip" viewBox="0 0 10 10"><path d="M1 10l9-9M4 10l6-6M7 10l3-3"/></svg>
        </footer>
    </div>
</body>
</html>
```
FILE: styles.css
```css
* {
    box-sizing: border-box;
}

body {
    margin: 0;
    height: 100vh;
    padding: 1px 1px 3px;
    background: linear-gradient(#77776f, #9aa093 3px, #8c9a86 50%, #4a6b3c);
    font-family: "Liberation Sans", "Noto Sans CJK SC", sans-serif;
    font-size: 7px;
    color: #111;
}

.defs {
    display: none;
}

.icon {
    width: 11px;
    height: 11px;
    flex: none;
    display: block;
}

button {
    border: none;
    padding: 0;
    margin: 0;
    background: none;
    font: inherit;
    color: inherit;
    display: flex;
    align-items: center;
    justify-content: center;
}

a {
    color: inherit;
    text-decoration: none;
}

.tri {
    border: 2px solid transparent;
}

.tri.left {
    border-right: 3px solid #000;
    border-left: none;
}

.tri.right {
    border-left: 3px solid #000;
    border-right: none;
}

.tri.up {
    border-bottom: 3px solid #333;
    border-top: none;
}

.tri.down {
    border-top: 3px solid #333;
    border-bottom: none;
}

.tri.bar.left {
    box-shadow: -1px 0 #000;
}

.tri.bar.right {
    box-shadow: 1px 0 #000;
}

.window {
    display: flex;
    flex-direction: column;
    height: 100%;
    border: 1px solid #6d8560;
    border-top-color: #d9ecc8;
    border-radius: 5px;
    padding: 0 1px 3px 4px;
    background: linear-gradient(#bfe094, #dfead6 60px, #dfead6 116px, #a9cf86 120px, #a6cc80);
}

/* title bar */
.titlebar {
    display: flex;
    align-items: center;
    flex: none;
    height: 17px;
    padding-left: 1px;
    margin-left: -4px;
    margin-right: -1px;
    border-radius: 4px 4px 0 0;
    background: linear-gradient(100deg, #d3e8b8, #c5e49d 20%, #b9df8a 32%, #c6e7a0 48%, #b4dc84 56%, #c2e699 62%, #b9e18b 80%, #c4e5a0);
}

.titlebar .icon {
    width: 9px;
    height: 9px;
    margin: 0 3px 0 4px;
}

.titlebar h1 {
    margin: 0;
    font-size: 8px;
    font-weight: 400;
}

.glass {
    display: flex;
    gap: 12px;
    margin: 0 18px 5px auto;
    filter: blur(2px);
}

.glass i {
    width: 13px;
    height: 5px;
    background: #8fb56a;
}

.winbtns {
    display: flex;
    align-self: flex-start;
    margin: 1px 2px 0 0;
    border: 1px solid #6f7f68;
    border-top: none;
    border-radius: 0 0 4px 4px;
}

.winbtns button {
    width: 16px;
    height: 9px;
    background: linear-gradient(#d9e6cd, #a5b69a);
    border-right: 1px solid #7d8c76;
}

.winbtns .min::before {
    content: '';
    width: 7px;
    height: 3px;
    background: #fff;
    border: 1px solid #687364;
}

.winbtns .max::before {
    content: '';
    width: 7px;
    height: 5px;
    background: #fff;
    border: 1px solid #687364;
}

.winbtns .close {
    width: 27px;
    border: none;
    border-radius: 0 0 4px 0;
    background: linear-gradient(#e2a087, #c8492b 50%, #d86b42);
    color: #fff;
}

/* menu bar */
.menubar {
    display: flex;
    align-items: center;
    flex: none;
    height: 12px;
    padding-left: 4px;
    background: linear-gradient(#f5f8fc, #d5dded 60%, #e3e8f4);
}

.menubar > a,
.opened > a {
    display: block;
    padding: 0 4px;
    line-height: 12px;
    white-space: nowrap;
}

.opened {
    position: relative;
}

.opened .active {
    position: relative;
    z-index: 6;
    margin: 0 1px;
    background: #c2c6cf;
    border-radius: 1px;
    outline: 2px solid #dd2f2f;
    outline-offset: 1px;
}

.mdi {
    display: flex;
    gap: 1px;
    margin-left: auto;
}

.mdi button {
    width: 10px;
    height: 10px;
    background: #eef3fa;
    border: 1px solid #b9c7dc;
    color: #3c5677;
}

/* drop-down menu */
.dropdown {
    position: absolute;
    z-index: 5;
    top: 12px;
    left: 0;
    width: 91px;
    margin: 0;
    padding: 1px 0;
    list-style: none;
    background: #f1f1f1;
    border: 1px solid #999;
}

.dropdown a {
    display: flex;
    align-items: center;
    height: 12px;
    padding-left: 15px;
    line-height: 12px;
    white-space: nowrap;
}

.dropdown .icon {
    margin: 0 3px 0 -14px;
}

.dropdown .more::after {
    content: '';
    margin: 0 4px 0 auto;
    border-left: 3px solid #111;
    border-top: 2px solid transparent;
    border-bottom: 2px solid transparent;
}

.dropdown .sep {
    height: 1px;
    margin: 1px 1px 2px;
    background: #c9c9c9;
}

.dropdown .selected {
    background: #3390e8;
    color: #fff;
    outline: 2px solid #d9303e;
    outline-offset: -1px;
}

/* horizontal tool bars */
.toolrow {
    display: flex;
    flex: none;
    height: 17px;
    gap: 2px;
    padding-left: 1px;
    background: #f0f0f0;
    border-bottom: 1px solid #d0d0d0;
}

.toolrow.second {
    height: 16px;
}

.toolbar {
    display: flex;
    align-items: center;
    padding: 0 2px;
    border-right: 1px solid #b5b5b5;
    background: #f5f5f5;
}

.toolbar::before {
    content: '';
    width: 3px;
    height: 13px;
    margin-right: 2px;
    border: solid #c4c4c4;
    border-width: 0 1px;
}

.toolbar button {
    width: 13px;
    height: 13px;
    flex: none;
}

.vsep {
    width: 1px;
    height: 11px;
    margin: 0 2px;
    background: #a9a9a9;
    flex: none;
}

.caret {
    border-top: 2px solid #222;
    border-left: 2px solid transparent;
    border-right: 2px solid transparent;
    margin-left: 2px;
}

.standard {
    flex: 0 1 384px;
}

.standard .push {
    margin-left: auto;
}

.styles {
    flex: 0 1 231px;
}

.workspace {
    flex: 0 1 137px;
}

.layer {
    flex: 0 1 228px;
}

.properties {
    flex: 0 1 344px;
}

.combo {
    display: flex;
    align-items: center;
    flex: 1;
    min-width: 0;
    height: 13px;
    padding: 0 3px 0 1px;
    background: #fff;
    border-bottom: 1px solid #ddd;
}

.combo::after {
    content: '';
    border-top: 3px solid #111;
    border-left: 2px solid transparent;
    border-right: 2px solid transparent;
    pointer-events: none;
}

.combo .icon {
    width: 9px;
    height: 9px;
}

.combo select {
    flex: 1;
    min-width: 0;
    appearance: none;
    border: none;
    padding: 0;
    background: none;
    font-family: "Liberation Mono", "Noto Sans CJK SC", monospace;
    font-size: 6px;
    color: #111;
}

.layer .combo select {
    color: transparent;
}

.swatch {
    width: 7px;
    height: 7px;
    margin-right: 2px;
    border: 1px solid #333;
}

.stroke {
    width: 35px;
    height: 1px;
    margin-right: 2px;
    background: #444;
}

.weight {
    width: 21px;
    height: 9px;
    margin-right: 2px;
    background: #000;
}

.properties .off {
    flex: 0 1 66px;
    background: #ececec;
    border: 1px solid #d2d2d2;
}

.off::after {
    border-top-color: #aaa;
}

.off select {
    color: #888;
    opacity: 1;
    font-size: 7px;
}

/* work area */
.work {
    display: flex;
    flex: 1;
    min-height: 0;
    background: #f0f0f0;
}

.side {
    flex: 0 0 16px;
    padding-right: 1px;
    background: #f0f0f0;
}

.side.end {
    flex-basis: 15px;
    padding: 0 0 0 1px;
}

.vbar {
    display: flex;
    flex-direction: column;
    align-items: center;
    padding-bottom: 2px;
    background: #f6f7f8;
    border: solid #bbb;
    border-width: 0 1px 1px 0;
}

.vbar + .vbar {
    margin-top: 2px;
}

.vbar::before {
    content: '';
    width: 11px;
    height: 3px;
    margin-bottom: 1px;
    border: solid #c4c4c4;
    border-width: 1px 0;
}

.vbar button {
    width: 13px;
    height: 13px;
}

.vbar .mtext {
    font-size: 11px;
    font-weight: 700;
}

.hsep {
    width: 12px;
    height: 1px;
    margin: 1px 0;
    background: #bbb;
}

.drawing {
    display: flex;
    flex-direction: column;
    flex: 1;
    min-width: 0;
    margin-right: 1px;
}

.canvas {
    display: flex;
    align-items: flex-end;
    flex: 1;
    background: #000;
    border-top: 1px solid #777;
    border-left: 1px solid #777;
}

.ucs {
    width: 60px;
    height: 60px;
}

.ucs path {
    fill: none;
    stroke: #ccc;
}

.ucs text {
    fill: #ccc;
    font-size: 9px;
}

.tabs {
    display: flex;
    height: 12px;
    padding-bottom: 1px;
    background: #f0f0f0;
}

.tabs button {
    width: 11px;
    background: #fafafa;
    border-right: 1px solid #ccc;
}

.tab {
    display: flex;
    padding-left: 2px;
    line-height: 10px;
    background: #fff;
    border-bottom: 1px solid #777;
}

/* slanted edge between the sheets */
.tab::after {
    content: '';
    width: 1px;
    margin: 0 2px 0 3px;
    background: #333;
    transform: skewX(-20deg);
}

.tab.current {
    padding-left: 5px;
    background: #000;
    color: #fff;
    clip-path: polygon(0 0, 100% 0, calc(100% - 3px) 100%, 4px 100%);
}

/* command line */
.command {
    display: flex;
    flex: none;
    height: 32px;
    padding: 5px 2px 1px 11px;
    background: #f0f0f0;
    border-top: 1px solid #999;
    font-family: "Liberation Mono", "Noto Sans CJK SC", monospace;
    font-size: 8px;
}

.lines {
    flex: 1;
    background: #fff;
    border: solid #777;
    border-width: 1px 0 0 1px;
}

.lines p {
    margin: 0;
    line-height: 12px;
    border-bottom: 1px solid #ddd;
}

.prompt {
    display: flex;
    line-height: 12px;
}

.prompt input {
    flex: 1;
    min-width: 0;
    height: 11px;
    padding: 0;
    border: none;
    outline: none;
    background: none;
    font: inherit;
}

.prompt button {
    width: 18px;
    background: #f0f0f0;
}

.scroll {
    display: flex;
    flex-direction: column;
    width: 13px;
    border-top: 1px solid #777;
}

.scroll button {
    height: 6px;
}

/* status bar */
.status {
    display: flex;
    align-items: center;
    flex: none;
    height: 14px;
    padding-left: 4px;
    background: #f1eeee;
    border-top: 1px solid #c8c8c8;
}

.status code {
    margin-left: 10px;
    font-family: "Liberation Mono", monospace;
    font-size: 6px;
}

.status .grip {
    align-self: flex-end;
    width: 8px;
    height: 8px;
    margin-left: auto;
    stroke: #aaa;
}
```
